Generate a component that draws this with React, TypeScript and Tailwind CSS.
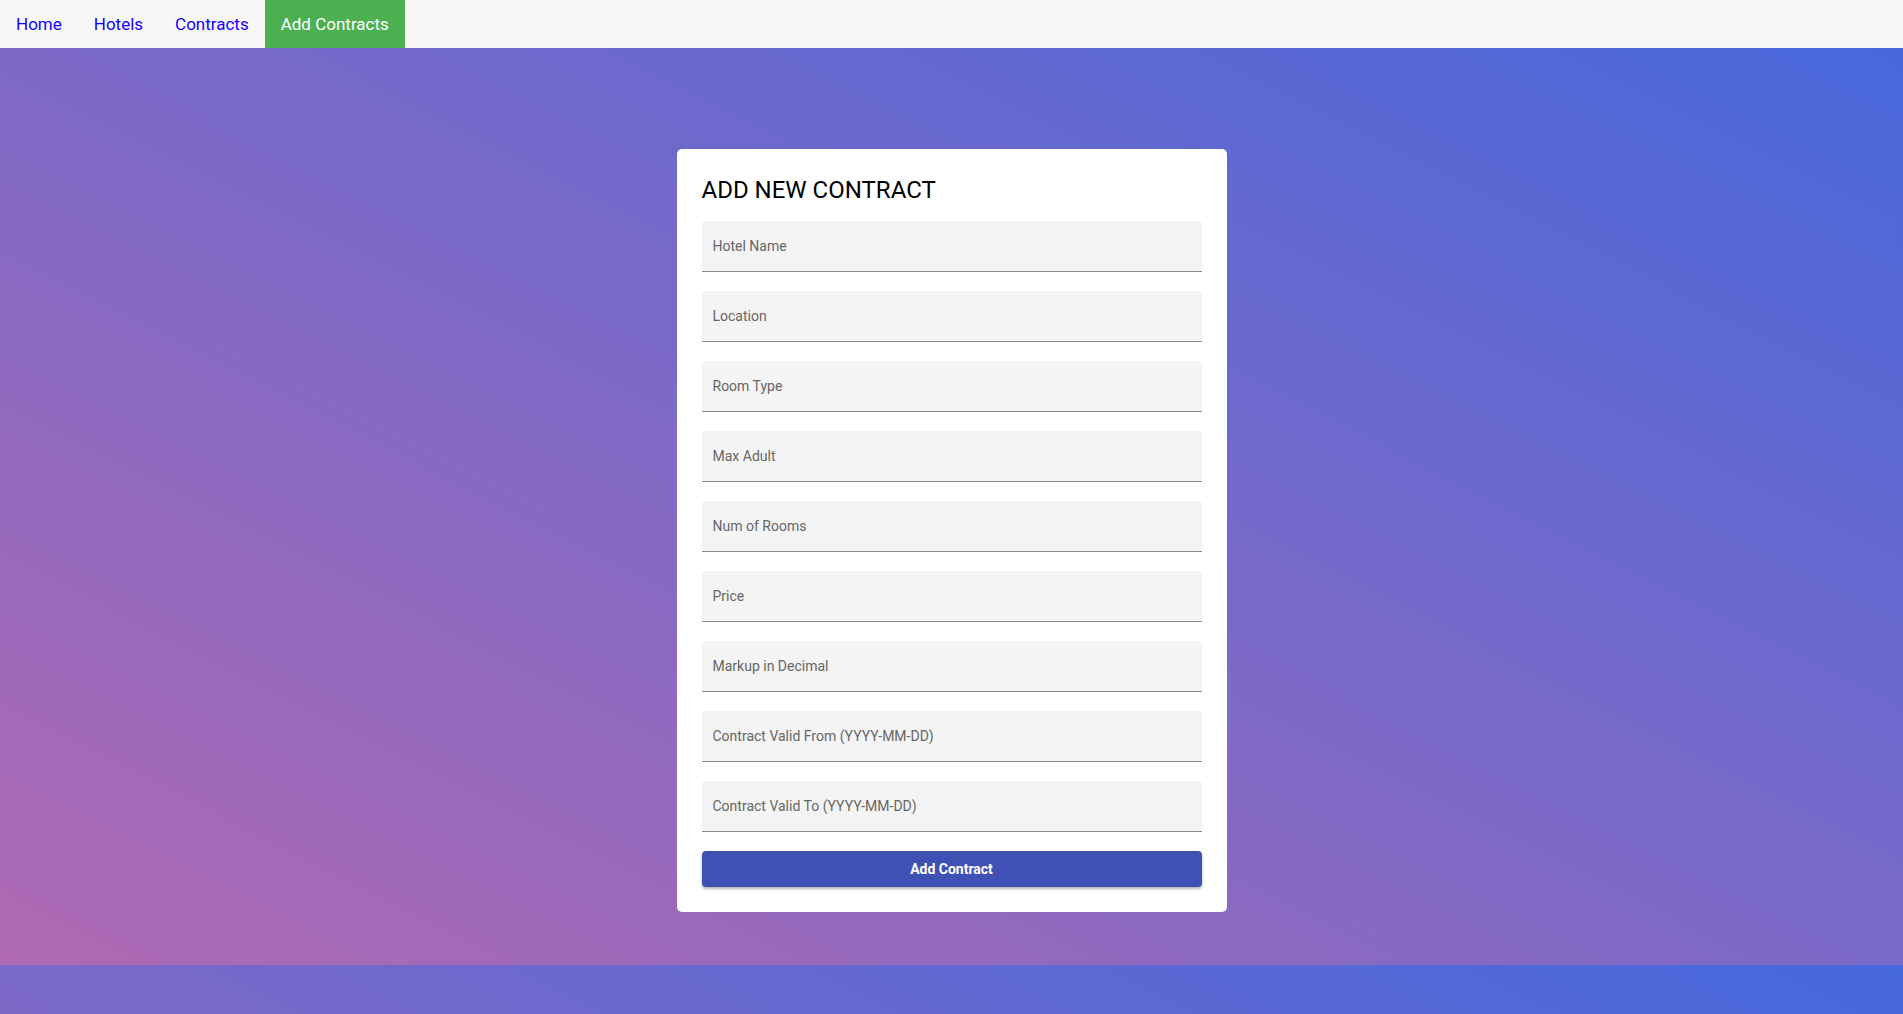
import React from 'react';

const fields = [
  'Hotel Name',
  'Location',
  'Room Type',
  'Max Adult',
  'Num of Rooms',
  'Price',
  'Markup in Decimal',
  'Contract Valid From (YYYY-MM-DD)',
  'Contract Valid To (YYYY-MM-DD)',
];

const links = ['Home', 'Hotels', 'Contracts'];

function NavBar() {
  return (
    <nav className="flex h-[48px] bg-[#f7f7f7]">
      {links.map((label) => (
        <a
          key={label}
          href="#"
          className="px-4 py-[14px] text-[17px] leading-[20px] text-[#1200ff]"
        >
          {label}
        </a>
      ))}
      <a href="#" className="bg-[#4caf50] px-4 py-[14px] text-[17px] leading-[20px] text-white">
        Add Contracts
      </a>
    </nav>
  );
}

export default function App() {
  return (
    <div
      className="relative h-[1014px] w-full bg-[linear-gradient(to_top_right,#b06ab3,#4568dc)] bg-[length:100%_965px] bg-repeat-y"
      style={{ fontFamily: 'Roboto, "Noto Sans", sans-serif' }}
    >
      <NavBar />
      <div className="flex justify-center pt-[101px]">
        <form className="w-[550px] rounded-[5px] bg-white px-[25px] pt-[27px] pb-[25px]">
          <h2 className="mb-[17px] text-[24px] leading-[28px] text-black">ADD NEW CONTRACT</h2>
          <div className="flex flex-col gap-[19px]">
            {fields.map((f) => (
              <input
                key={f}
                placeholder={f}
                className="h-[51px] w-full rounded-t-[4px] border-b border-[#8c8c8c] bg-[#f4f4f4] px-[11px] text-[14px] text-[#555] outline-none placeholder:text-[#666]"
              />
            ))}
          </div>
          <button
            type="button"
            className="mt-[19px] h-[36px] w-full rounded-[4px] bg-[#3f51b5] text-[14px] font-bold text-white shadow-[0_2px_3px_rgba(0,0,0,0.3)]"
          >
            Add Contract
          </button>
        </form>
      </div>
    </div>
  );
}
